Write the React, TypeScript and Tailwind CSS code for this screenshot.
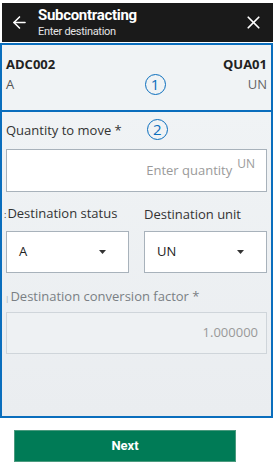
import React from "react";
import { ArrowLeft, X } from "lucide-react";

const font = { fontFamily: '"Open Sans", "Liberation Sans", sans-serif' };

const Caret = () => (
  <svg width="7" height="4" viewBox="0 0 7 4" className="shrink-0">
    <path d="M0 0 L7 0 L3.5 4 Z" fill="#333" />
  </svg>
);

const Step = ({ n }: { n: string }) => (
  <span className="w-[21px] h-[21px] rounded-full border-[1.5px] border-[#0a6ebd] text-[#0a6ebd] text-[15px] leading-none flex items-center justify-center">
    {n}
  </span>
);

const SelectBox = ({ value }: { value: string }) => (
  <div className="h-[42px] bg-white border border-[#a8b2bb] flex items-center justify-between pl-[12px] pr-[22px] text-[13px] text-[#222]">
    <span>{value}</span>
    <Caret />
  </div>
);

export default function App() {
  return (
    <div className="w-[275px] h-[465px] bg-white overflow-hidden" style={font}>
      <div className="mx-[2px] mt-[3px] h-[39px] bg-[#1a1a1a] flex items-center text-white">
        <ArrowLeft size={19} strokeWidth={2} className="ml-[8px]" />
        <div className="ml-[9px] flex-1 leading-none" style={{ fontFamily: "Roboto, sans-serif" }}>
          <div className="text-[15px] font-bold tracking-[-0.3px]">Subcontracting</div>
          <div className="text-[11px] mt-[3px] text-[#e5e5e5] tracking-[-0.3px]">Enter destination</div>
        </div>
        <X size={21} strokeWidth={2} className="mr-[9px]" />
      </div>

      <div className="mt-[1px] mr-[2px] h-[69px] border-2 border-[#0a6ebd] bg-[#f0f3f5] px-[4px] pt-[13px] flex justify-between">
        <div className="leading-none">
          <div className="text-[13px] font-bold text-[#222]">ADC002</div>
          <div className="text-[13px] text-[#555] mt-[7px]">A</div>
        </div>
        <div className="mt-[16px] ml-[32px]">
          <Step n="1" />
        </div>
        <div className="leading-none text-right">
          <div className="text-[13px] font-bold text-[#222]">QUA01</div>
          <div className="text-[13px] text-[#666] mt-[7px]">UN</div>
        </div>
      </div>

      <div className="mr-[2px] h-[306px] border-2 border-t-0 border-[#0a6ebd] bg-gradient-to-b from-[#f0f3f5] to-[#eaedf0] px-[4px] pt-[10px]">
        <div className="flex items-center h-[17px]">
          <span className="text-[13px] text-[#333]">Quantity to move *</span>
          <span className="ml-[25px] -mt-[2px]">
            <Step n="2" />
          </span>
        </div>
        <div className="mt-[10px] h-[43px] bg-white border border-[#a8b2bb] flex justify-end pr-[11px]">
          <span className="text-[13px] text-[#9a9a9a] mt-[11px]">Enter quantity</span>
          <span className="text-[12px] text-[#9a9a9a] ml-[5px] mt-[5px]">UN</span>
        </div>

        <div className="mt-[12px] grid grid-cols-2 gap-[15px]">
          <div>
            <div className="text-[13px] text-[#333] h-[18px] -ml-[2px]">
              <span className="text-[9px] mr-[1px]">:</span>Destination status
            </div>
            <div className="mt-[9px]">
              <SelectBox value="A" />
            </div>
          </div>
          <div>
            <div className="text-[13px] text-[#333] h-[18px] mt-[1px]">Destination unit</div>
            <div className="mt-[8px]">
              <SelectBox value="UN" />
            </div>
          </div>
        </div>

        <div className="mt-[14px] text-[13px] text-[#7a7f84] h-[18px] -ml-[1px]">
          <span className="text-[8px] text-[#aaa] mr-[1px]">|</span>Destination conversion factor *
        </div>
        <div className="mt-[7px] h-[42px] bg-[#eef1f3] border border-[#cfd5da] flex items-center justify-end pr-[8px]">
          <span className="text-[13px] text-[#999]">1.000000</span>
        </div>
      </div>

      <div className="mt-[12px] ml-[14px] w-[222px] h-[32px] bg-[#007b56] border border-[#4a9a7e] flex items-center justify-center">
        <span className="text-[13px] font-bold text-white" style={{ fontFamily: "Roboto, sans-serif" }}>Next</span>
      </div>
    </div>
  );
}
